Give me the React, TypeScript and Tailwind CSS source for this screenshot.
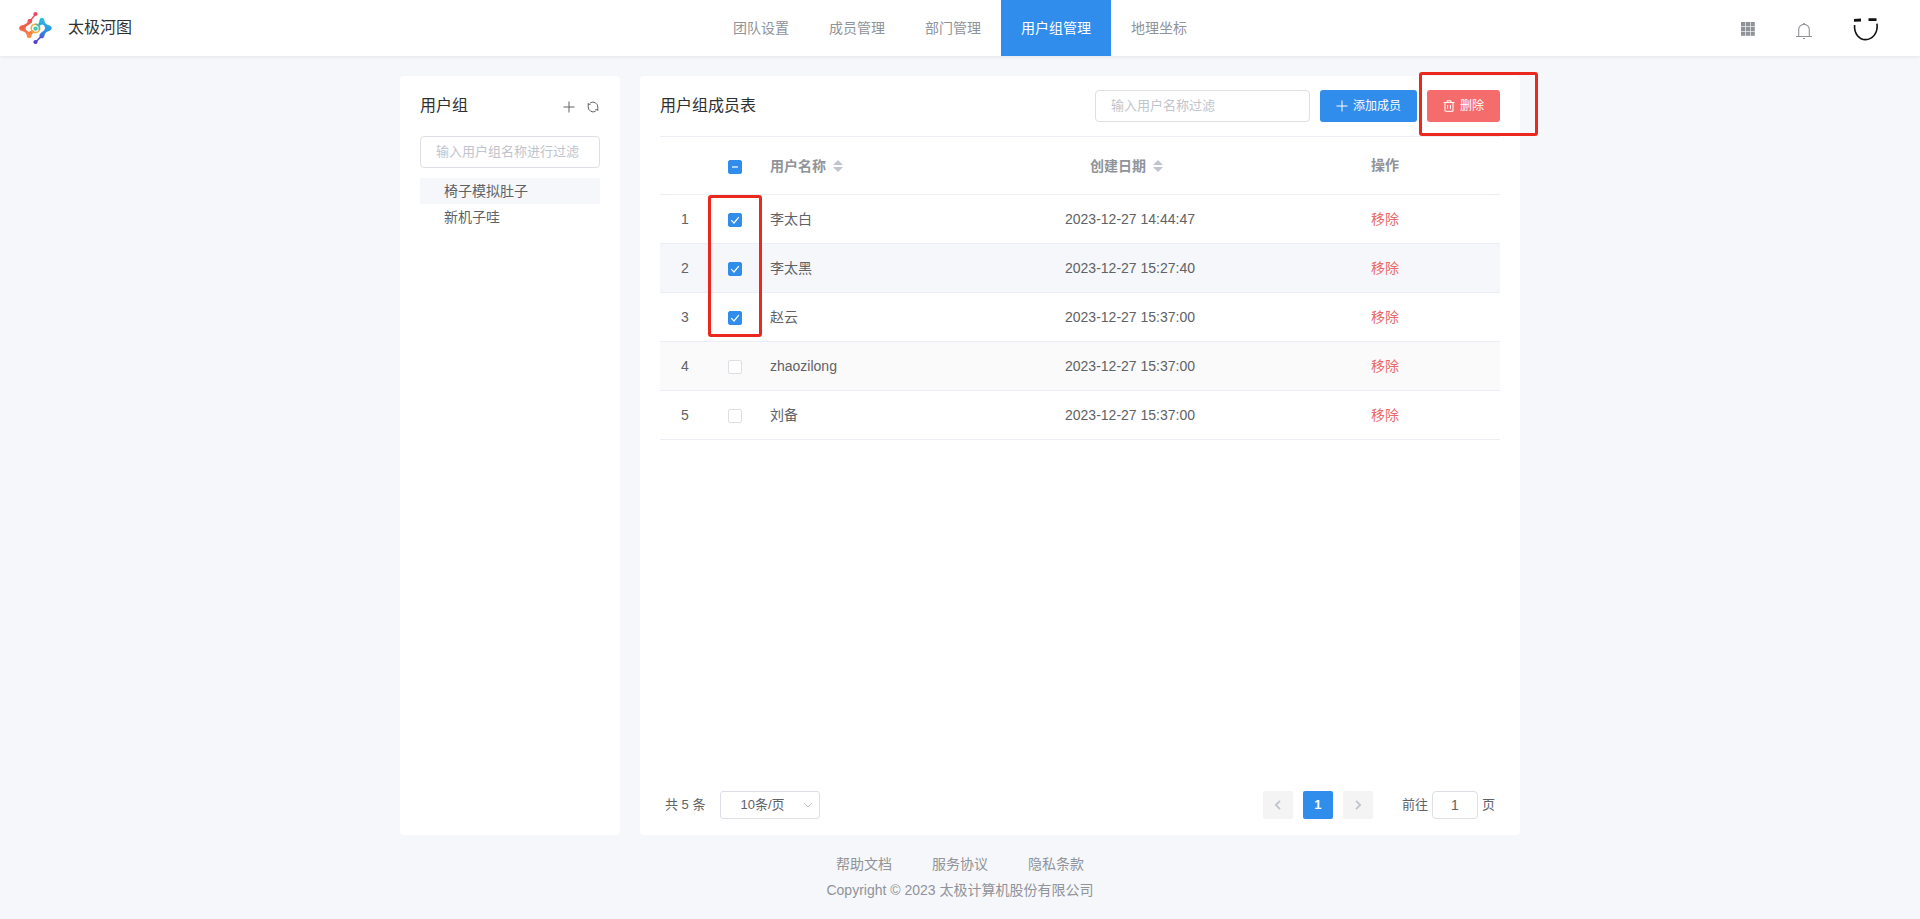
import { useState } from 'react';
import type { ReactNode } from 'react';

type Member = { id: number; name: string; created: string };

const NAV = ['团队设置', '成员管理', '部门管理', '用户组管理', '地理坐标'];
const GROUPS = ['椅子模拟肚子', '新机子哇'];
const FOOTER_LINKS = ['帮助文档', '服务协议', '隐私条款'];
const MEMBERS: Member[] = [
  { id: 1, name: '李太白', created: '2023-12-27 14:44:47' },
  { id: 2, name: '李太黑', created: '2023-12-27 15:27:40' },
  { id: 3, name: '赵云', created: '2023-12-27 15:37:00' },
  { id: 4, name: 'zhaozilong', created: '2023-12-27 15:37:00' },
  { id: 5, name: '刘备', created: '2023-12-27 15:37:00' },
];

function Logo() {
  return (
    <svg viewBox="0 0 34 34" className="size-[34px]" aria-hidden="true">
      <defs>
        <linearGradient id="warm" gradientUnits="userSpaceOnUse" x1="8" y1="5" x2="15" y2="27">
          <stop offset="0" stopColor="#ee4560" />
          <stop offset="0.5" stopColor="#f2664a" />
          <stop offset="1" stopColor="#f9963f" />
        </linearGradient>
        <linearGradient id="cool" gradientUnits="userSpaceOnUse" x1="25" y1="7" x2="20" y2="32">
          <stop offset="0" stopColor="#2bbfdc" />
          <stop offset="0.5" stopColor="#2f8ee6" />
          <stop offset="1" stopColor="#5a35c8" />
        </linearGradient>
      </defs>
      <g fill="url(#warm)">
        <circle cx="17.5" cy="3" r="2.1" />
        <circle cx="12" cy="10" r="2.3" />
        <path d="M9.9 9.4C9.5 12 8 13.4 4 14.2C0.2 15 0.2 19.2 4 20C7.4 20.8 8.6 22.4 8.8 25C9.2 28 13 28 13.6 25C13.9 23 15 21.8 17 21.6L15 19C12.5 20 11.5 21.2 10 20.4C8.4 19.4 7.4 18.4 7.6 17C8 14.6 12.8 13.2 14 11Z" />
      </g>
      <path d="M17.2 3.6L12.6 9.4" stroke="#ee4560" strokeWidth="1.5" />
      <g fill="url(#cool)">
        <circle cx="17.5" cy="31" r="2.1" />
        <path d="M21.4 9.4C21.8 6 25.8 6 26.2 9C26.6 12.2 28 13.4 31 14.2C34.6 15.2 34.6 19 31 20C28 20.8 26.8 22.2 26.4 25C25.8 28 21.4 28.2 21.4 25C21.4 21.4 26.6 20.6 27 17.6C27.2 15.6 26 13.8 24.2 13.4C22.6 13.4 22 14.8 21 16L18.8 14.4C20.6 12.8 21.2 11.6 21.4 9.4Z" />
      </g>
      <path d="M22.6 26L17.8 31" stroke="#4a48d0" strokeWidth="1.5" />
      <circle cx="17.4" cy="17.4" r="4.2" fill="none" stroke="#f7ab3d" strokeWidth="1.6" />
      <path d="M17.4 13.2A4.2 4.2 0 0 1 21.2 19" fill="none" stroke="#45c1b0" strokeWidth="1.6" />
      <circle cx="17.6" cy="17.6" r="2.2" fill="#45c9b4" />
    </svg>
  );
}

function GridIcon() {
  return (
    <svg viewBox="0 0 14 14" className="size-3.5" fill="#909399" aria-hidden="true">
      {[0, 4.8, 9.6].map((y) => [0, 4.8, 9.6].map((x) => <rect key={`${x}-${y}`} x={x} y={y} width="4.2" height="4.2" />))}
    </svg>
  );
}

function BellIcon() {
  return (
    <svg viewBox="0 0 16 16" className="size-4" fill="none" stroke="#909399" strokeWidth="1.1" aria-hidden="true">
      <path d="M0 13.5H16M2.7 13.5V6.5A5.3 5.1 0 0 1 13.3 6.5V13.5M7 15.5H9" />
      <path d="M8 0V1.5" strokeWidth="1.6" />
    </svg>
  );
}

function AvatarIcon() {
  return (
    <svg viewBox="0 0 26 24" className="h-6 w-[26px]" fill="none" stroke="#111" aria-hidden="true">
      <path d="M1 3.4L8 3M15.5 2.6H23.5" strokeWidth="2.8" />
      <path d="M1.6 8C0.9 17 6.5 22.6 12.5 22.6C19.5 22.6 25.2 16 24 6.6" strokeWidth="1.6" />
    </svg>
  );
}

function PlusIcon() {
  return (
    <svg viewBox="0 0 12 12" className="size-3" fill="none" stroke="currentColor" aria-hidden="true">
      <path d="M6 0.5V11.5M0.5 6H11.5" />
    </svg>
  );
}

function RefreshIcon() {
  return (
    <svg viewBox="0 0 12 12" className="size-3" fill="none" stroke="currentColor" aria-hidden="true">
      <path d="M3.4 1.7A5 5 0 0 1 10.8 6.2M8.6 10.3A5 5 0 0 1 1.2 5.8" />
      <path d="M1.2 5.8V2.2M1 3.2H3.8M10.8 6.2V9.8M11 8.8H8.2" />
    </svg>
  );
}

function TrashIcon() {
  return (
    <svg viewBox="0 0 12 12" className="size-3" fill="none" stroke="currentColor" aria-hidden="true">
      <path d="M0.5 2.5H11.5M4 2.5V0.8H8V2.5M2 2.5V11.3H10V2.5M4.6 5V9M7.4 5V9" />
    </svg>
  );
}

function SortIcon() {
  return (
    <svg viewBox="0 0 10 12" className="h-3 w-2.5" fill="#c0c4cc" aria-hidden="true">
      <path d="M5 0L10 5H0ZM5 12L0 7H10Z" />
    </svg>
  );
}

function Chevron({ d }: { d: string }) {
  return (
    <svg viewBox="0 0 12 12" className="size-3" fill="none" stroke="currentColor" strokeWidth="1.8" aria-hidden="true">
      <path d={d} />
    </svg>
  );
}

function Checkbox(props: { label: string; checked: boolean; partial?: boolean; onChange: () => void }) {
  const on = props.checked || props.partial;
  return (
    <label className="relative inline-flex size-3.5 align-middle">
      <input
        type="checkbox"
        aria-label={props.label}
        checked={props.checked}
        onChange={props.onChange}
        ref={(el) => {
          if (el) el.indeterminate = !!props.partial;
        }}
        className="size-3.5 appearance-none rounded-[2px] border border-[#dcdfe6] bg-white checked:border-[#308dec] checked:bg-[#308dec] indeterminate:border-[#308dec] indeterminate:bg-[#308dec]"
      />
      {on && (
        <svg viewBox="0 0 14 14" className="pointer-events-none absolute inset-0 size-3.5" fill="none" stroke="#fff" aria-hidden="true">
          {props.partial ? <path d="M4 7H10" strokeWidth="1.6" opacity="0.75" /> : <path d="M3.2 7.2L6 10L10.8 4.2" strokeWidth="1.2" />}
        </svg>
      )}
    </label>
  );
}

function SortHeader({ children }: { children: ReactNode }) {
  return (
    <button type="button" className="inline-flex items-center gap-[7px] pr-[7px] align-middle font-bold">
      {children}
      <SortIcon />
    </button>
  );
}

export default function App() {
  const [selected, setSelected] = useState<number[]>([1, 2, 3]);
  const [group, setGroup] = useState(0);
  const all = selected.length === MEMBERS.length;
  const toggle = (id: number) => setSelected((s) => (s.includes(id) ? s.filter((v) => v !== id) : [...s, id]));

  return (
    <div className="flex min-h-screen flex-col bg-[#f5f7fa] font-['Liberation_Sans','Noto_Sans_CJK_SC',sans-serif] text-sm text-[#606266]">
      <header className="z-10 grid h-14 grid-cols-[1fr_auto_1fr] bg-white shadow-[0_1px_4px_rgba(0,21,41,0.08)]">
        <div className="flex items-center gap-4 pl-[18px] text-base text-[#303133]">
          <Logo />
          <span>太极河图</span>
        </div>
        <nav className="flex">
          {NAV.map((item) => (
            <a
              key={item}
              href="#"
              className={`flex items-center px-5 ${item === '用户组管理' ? 'bg-[#308dec] text-white' : 'text-[#909399]'}`}
            >
              {item}
            </a>
          ))}
        </nav>
        <div className="flex items-center justify-end gap-[41px] pt-0.5 pr-[41px]">
          <button type="button" aria-label="应用"><GridIcon /></button>
          <button type="button" aria-label="通知" className="pt-1"><BellIcon /></button>
          <button type="button" aria-label="账户"><AvatarIcon /></button>
        </div>
      </header>

      <main className="mx-auto flex w-full max-w-[1120px] flex-1 gap-5 pt-5">
        <aside className="w-[220px] shrink-0 rounded bg-white px-5">
          <div className="flex h-15 items-center">
            <h2 className="flex-1 text-base text-[#303133]">用户组</h2>
            <div className="flex gap-3 pt-0.5 pr-px text-[#606266]">
              <button type="button" aria-label="新增用户组"><PlusIcon /></button>
              <button type="button" aria-label="刷新"><RefreshIcon /></button>
            </div>
          </div>
          <input
            aria-label="用户组名称"
            placeholder="输入用户组名称进行过滤"
            className="block h-8 w-full rounded border border-[#dcdfe6] px-[15px] pb-0.5 text-[13px] outline-none placeholder:text-[#c0c4cc]"
          />
          <ul className="mt-2.5">
            {GROUPS.map((name, i) => (
              <li key={name}>
                <button
                  type="button"
                  onClick={() => setGroup(i)}
                  className={`flex h-[26px] w-full items-center pl-6 ${i === group ? 'bg-[#f5f7fa]' : ''}`}
                >
                  {name}
                </button>
              </li>
            ))}
          </ul>
        </aside>

        <section className="flex min-w-0 flex-1 flex-col rounded bg-white px-5">
          <div className="flex h-15 items-center gap-2.5">
            <h2 className="flex-1 text-base text-[#303133]">用户组成员表</h2>
            <input
              aria-label="用户名称"
              placeholder="输入用户名称过滤"
              className="h-8 w-[215px] rounded border border-[#dcdfe6] px-[15px] pb-0.5 text-[13px] outline-none placeholder:text-[#c0c4cc]"
            />
            <button type="button" className="flex h-8 items-center gap-[5px] rounded-[3px] bg-[#308dec] px-4 text-xs text-white">
              <PlusIcon />
              添加成员
            </button>
            <div className="relative z-10">
              <button type="button" className="flex h-8 items-center gap-[5px] rounded-[3px] bg-[#f56c6c] px-4 text-xs text-white">
                <TrashIcon />
                删除
              </button>
              <div className="pointer-events-none absolute -top-[18px] -left-2 h-16 w-[119px] rounded-[3px] border-3 border-[#ea281e]" />
            </div>
          </div>

          <div className="relative border-t border-[#ebeef5]">
            <table className="w-full table-fixed">
              <colgroup>
                <col className="w-[50px]" />
                <col className="w-[50px]" />
                <col className="w-[230px]" />
                <col className="w-[280px]" />
                <col className="w-[230px]" />
              </colgroup>
              <thead>
                <tr className="h-[57px] border-b border-[#ebeef5] text-[#909399]">
                  <th />
                  <th>
                    <Checkbox
                      label="全选"
                      checked={all}
                      partial={selected.length > 0 && !all}
                      onChange={() => setSelected(all ? [] : MEMBERS.map((m) => m.id))}
                    />
                  </th>
                  <th className="pl-2.5 text-left"><SortHeader>用户名称</SortHeader></th>
                  <th><SortHeader>创建日期</SortHeader></th>
                  <th>操作</th>
                </tr>
              </thead>
              <tbody>
                {MEMBERS.map((m) => (
                  <tr key={m.id} className={`h-[49px] border-b border-[#ebeef5] ${m.id === 2 ? 'bg-[#f5f7fa]' : m.id === 4 ? 'bg-[#fafafa]' : ''}`}>
                    <td className="text-center">{m.id}</td>
                    <td className="text-center">
                      <Checkbox label={m.name} checked={selected.includes(m.id)} onChange={() => toggle(m.id)} />
                    </td>
                    <td className="pl-2.5">{m.name}</td>
                    <td className="text-center">{m.created}</td>
                    <td className="text-center">
                      <button type="button" className="text-[#ea6a6a]">移除</button>
                    </td>
                  </tr>
                ))}
              </tbody>
            </table>
            <div className="pointer-events-none absolute top-[58px] left-12 h-[142px] w-[54px] rounded-[3px] border-3 border-[#ea281e]" />
          </div>

          <div className="mt-auto flex items-center justify-between px-[5px] pb-4 text-[13px]">
            <div className="flex items-center gap-[15px]">
              <span>共 5 条</span>
              <div className="relative">
                <select aria-label="每页条数" className="h-7 w-[100px] appearance-none rounded-[3px] border border-[#dcdfe6] bg-white pl-[19px] outline-none">
                  <option>10条/页</option>
                </select>
                <span className="pointer-events-none absolute top-2 right-1.5 text-[#c0c4cc]">
                  <svg viewBox="0 0 12 12" className="size-3" fill="none" stroke="currentColor" aria-hidden="true">
                    <path d="M2 4L6 8L10 4" />
                  </svg>
                </span>
              </div>
            </div>
            <div className="flex items-center">
              <div className="flex gap-2.5">
                <button type="button" aria-label="上一页" className="flex h-7 w-[30px] items-center justify-center rounded-[2px] bg-[#f4f4f5] text-[#c0c4cc]">
                  <Chevron d="M8 1.8L3.8 6L8 10.2" />
                </button>
                <button type="button" className="h-7 w-[30px] rounded-[2px] bg-[#308dec] font-bold text-white">1</button>
                <button type="button" aria-label="下一页" className="flex h-7 w-[30px] items-center justify-center rounded-[2px] bg-[#f4f4f5] text-[#c0c4cc]">
                  <Chevron d="M4 1.8L8.2 6L4 10.2" />
                </button>
              </div>
              <label className="ml-[29px] flex items-center gap-1">
                前往
                <input defaultValue="1" className="h-7 w-[46px] rounded border border-[#dcdfe6] text-center text-sm outline-none" />
                页
              </label>
            </div>
          </div>
        </section>
      </main>

      <footer className="flex flex-col items-center pt-4 pb-4 leading-[26px] text-[#909399]">
        <div className="flex gap-10">
          {FOOTER_LINKS.map((link) => (
            <a key={link} href="#">{link}</a>
          ))}
        </div>
        <p>Copyright © 2023 太极计算机股份有限公司</p>
      </footer>
    </div>
  );
}
